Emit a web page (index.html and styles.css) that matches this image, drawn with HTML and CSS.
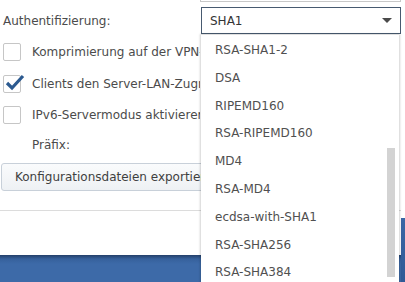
FILE: index.html
```html
<!DOCTYPE html>
<html lang="de">
<head>
    <meta charset="UTF-8">
    <title>VPN-Einstellungen</title>
    <link rel="stylesheet" href="styles.css">
</head>
<body>
    <div class="page">
        <div class="dialog">
            <div class="form">
                <div class="prev-row">
                    <div class="prev-input"></div>
                </div>
                <div class="row row-auth">
                    <label class="label">Authentifizierung:</label>
                    <div class="select">
                        <span>SHA1</span>
                        <span class="arrow"></span>
                    </div>
                </div>
                <div class="row check-row">
                    <span class="box"></span>
                    <span class="text">Komprimierung auf der VPN-Verbindung aktivieren</span>
                </div>
                <div class="row check-row">
                    <span class="box checked">
                        <svg width="22" height="20" viewBox="0 0 22 20">
                            <path d="M3 10 L8 15 L19 3" fill="none" stroke="#2c5a90" stroke-width="3.2" stroke-linejoin="miter"/>
                        </svg>
                    </span>
                    <span class="text">Clients den Server-LAN-Zugriff erlauben</span>
                </div>
                <div class="row check-row row-ipv6">
                    <span class="box"></span>
                    <span class="text">IPv6-Servermodus aktivieren</span>
                </div>
                <div class="row prefix-row">
                    <span class="text">Präfix:</span>
                </div>
                <button class="btn"><span>Konfigurationsdateien exportieren</span></button>
            </div>
            <div class="divider"></div>
            <div class="spacer"></div>
            <div class="taskbar"></div>
        </div>
        <div class="edge">
            <div class="edge-blue"></div>
        </div>

        <ul class="dropdown">
            <li>RSA-SHA1-2</li>
            <li>DSA</li>
            <li>RIPEMD160</li>
            <li>RSA-RIPEMD160</li>
            <li>MD4</li>
            <li>RSA-MD4</li>
            <li>ecdsa-with-SHA1</li>
            <li>RSA-SHA256</li>
            <li>RSA-SHA384</li>
        </ul>
        <div class="scrollbar"></div>
    </div>
</body>
</html>
```
FILE: styles.css
```css
body {
    margin: 0;
    font-family: 'DejaVu Sans', Verdana, sans-serif;
    font-size: 12px;
    color: #4b4b4b;
    background-color: #FFFFFF;
    overflow: hidden;
}
.page {
    position: relative;
    display: flex;
    width: 405px;
    height: 282px;
    overflow: hidden;
}
.dialog {
    width: 401px;
    display: flex;
    flex-direction: column;
    flex-shrink: 0;
}
.form {
    padding-left: 3px;
}
.prev-row {
    height: 2px;
}
.prev-input {
    margin-left: 197px;
    width: 199px;
    height: 1px;
    border: 1px solid #c8c8c8;
    border-top: none;
}
.row {
    display: flex;
    align-items: center;
    white-space: nowrap;
}
.row-auth {
    margin-top: 5px;
    height: 27px;
}
.label {
    width: 198px;
    flex-shrink: 0;
}
.select {
    box-sizing: border-box;
    width: 200px;
    height: 27px;
    border: 1px solid #475a70;
    display: flex;
    align-items: center;
    justify-content: space-between;
    padding: 0 8px 0 8px;
    color: #333;
    flex-shrink: 0;
}
.arrow {
    width: 0;
    height: 0;
    border-left: 5px solid transparent;
    border-right: 5px solid transparent;
    border-top: 5px solid #4a4a4a;
}
.check-row {
    height: 32px;
    gap: 11px;
}
.check-row .text {
    width: 168px;
    overflow: hidden;
}
.row-auth + .check-row {
    margin-top: 2px;
}
.row-ipv6 {
    height: 29px;
}
.box {
    position: relative;
    box-sizing: border-box;
    width: 18px;
    height: 18px;
    border: 1px solid #c6c6c6;
    border-radius: 2px;
    flex-shrink: 0;
    background-color: #FFFFFF;
}
.box svg {
    position: absolute;
    left: 0;
    top: -3px;
}
.prefix-row {
    height: 32px;
    padding-left: 29px;
}
.btn {
    margin: 2px 0 0 -2px;
    height: 28px;
    width: 260px;
    text-align: left;
    padding: 0 0 0 13px;
    font-family: inherit;
    font-size: 12px;
    color: #3f3f3f;
    background: linear-gradient(#fafbfc, #eef1f4);
    border: 1px solid #c8d0d9;
    border-radius: 3px;
    white-space: nowrap;
}
.btn span {
    display: block;
    width: 186px;
    overflow: hidden;
}
.divider {
    margin-top: 19px;
    height: 1px;
    background-color: #dcdcdc;
}
.spacer {
    height: 44px;
}
.taskbar {
    flex: 1;
    background: linear-gradient(#24406a, #36619c 4px, #3d6aa8 9px);
}
.edge {
    flex: 1;
    display: flex;
    flex-direction: column;
}
.edge-blue {
    margin-top: 218px;
    flex: 1;
    background: linear-gradient(#3a67a5, #2f5a96);
}
.dropdown {
    position: absolute;
    left: 201px;
    top: 35px;
    width: 198px;
    height: 300px;
    margin: 0;
    padding: 2px 0 0 0;
    list-style: none;
    background-color: #FFFFFF;
    box-shadow: 0 0 2px 1px rgba(0, 0, 0, 0.18);
    color: #505050;
}
.dropdown li {
    height: 27.8px;
    line-height: 27.8px;
    padding-left: 14px;
}
.scrollbar {
    position: absolute;
    left: 387px;
    top: 148px;
    width: 8px;
    height: 129px;
    background-color: #d3d3d3;
}
```
